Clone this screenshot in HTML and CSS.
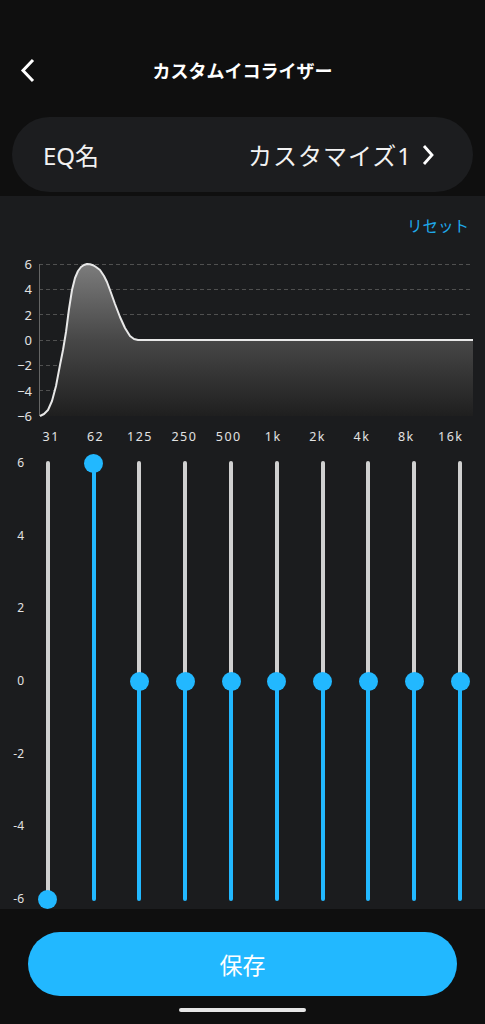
FILE: index.html
```html
<!DOCTYPE html>
<html>
<head>
    <title>カスタムイコライザー</title>
    <link rel="stylesheet" href="styles.css">
</head>
<body>
    <div class="top">
        <div class="header">
            <a class="back" href="#">
                <svg width="16" height="26" viewBox="0 0 16 26"><path d="M13 3 L3 13.5 L13 24" fill="none" stroke="#fff" stroke-width="3"/></svg>
            </a>
            <h1 class="title">カスタムイコライザー</h1>
            <span></span>
        </div>

        <div class="name-card">
            <span class="name-label">EQ名</span>
            <span class="name-value">
                <span class="name-text">カスタマイズ1</span>
                <svg width="14" height="22" viewBox="0 0 14 22"><path d="M3 2 L11 11 L3 20" fill="none" stroke="#fff" stroke-width="2.8"/></svg>
            </span>
        </div>
    </div>

    <div class="panel">
        <div class="reset-row"><a class="reset" href="#">リセット</a></div>

        <div class="graph">
            <div class="graph-axis">
                <span>6</span><span>4</span><span>2</span><span>0</span><span>−2</span><span>−4</span><span>−6</span>
            </div>
            <svg class="curve" width="434" height="166" viewBox="0 -7 434 166">
                <defs>
                    <linearGradient id="fill" x1="0" y1="0" x2="0" y2="152" gradientUnits="userSpaceOnUse">
                        <stop offset="0" stop-color="#7c7c7c"/>
                        <stop offset="0.5" stop-color="#474747"/>
                        <stop offset="1" stop-color="#1f1f1f"/>
                    </linearGradient>
                </defs>
                <g stroke="#505050" stroke-width="1" stroke-dasharray="4 3">
                    <line x1="0" y1="0.5" x2="434" y2="0.5"/>
                    <line x1="0" y1="25.5" x2="434" y2="25.5"/>
                    <line x1="0" y1="50.5" x2="434" y2="50.5"/>
                    <line x1="0" y1="76.5" x2="434" y2="76.5"/>
                    <line x1="0" y1="101.5" x2="434" y2="101.5"/>
                    <line x1="0" y1="126.5" x2="434" y2="126.5"/>
                    <line x1="0" y1="151.5" x2="434" y2="151.5"/>
                </g>
                <line x1="0.5" y1="0" x2="0.5" y2="152" stroke="#666"/>
                <polygon fill="url(#fill)" points="1,152 5,150 9,146 13,137 17,122 21,101 24,86 27,68 30,45 33,26 36,14 39,7 42,3 45,1 48,0 51,0.3 54,1.2 57,3 61,6 65,12 68,18 71,26 76,40 81,53 86,64 91,72 95,75 99,76 434,76 434,152"/>
                <polyline fill="none" stroke="#e8e8e8" stroke-width="2" stroke-linejoin="round" points="1,152 5,150 9,146 13,137 17,122 21,101 24,86 27,68 30,45 33,26 36,14 39,7 42,3 45,1 48,0 51,0.3 54,1.2 57,3 61,6 65,12 68,18 71,26 76,40 81,53 86,64 91,72 95,75 99,76 434,76"/>
            </svg>
        </div>

        <div class="freqs">
            <span>31</span><span>62</span><span>125</span><span>250</span><span>500</span>
            <span>1k</span><span>2k</span><span>4k</span><span>8k</span><span>16k</span>
        </div>

        <div class="sliders">
            <div class="slider-axis">
                <span>6</span><span>4</span><span>2</span><span>0</span><span>-2</span><span>-4</span><span>-6</span>
            </div>
            <!-- --y = knob centre on the track: 2 + (6 - gain) / 12 * 436 -->
            <div class="band" style="--y: 438px"><div class="track"></div><div class="knob"></div></div>
            <div class="band" style="--y: 2px"><div class="track"></div><div class="knob"></div></div>
            <div class="band" style="--y: 220px"><div class="track"></div><div class="knob"></div></div>
            <div class="band" style="--y: 220px"><div class="track"></div><div class="knob"></div></div>
            <div class="band" style="--y: 220px"><div class="track"></div><div class="knob"></div></div>
            <div class="band" style="--y: 220px"><div class="track"></div><div class="knob"></div></div>
            <div class="band" style="--y: 220px"><div class="track"></div><div class="knob"></div></div>
            <div class="band" style="--y: 220px"><div class="track"></div><div class="knob"></div></div>
            <div class="band" style="--y: 220px"><div class="track"></div><div class="knob"></div></div>
            <div class="band" style="--y: 220px"><div class="track"></div><div class="knob"></div></div>
        </div>
    </div>

    <div class="footer">
        <button class="save">保存</button>
        <div class="home-bar"></div>
    </div>
</body>
</html>
```

FILE: styles.css
```css
body {
    margin: 0;
    width: 485px;
    height: 1024px;
    background-color: #0f0f0f;
    color: #fff;
    font-family: "Noto Sans", "Noto Sans CJK JP", sans-serif;
    overflow: hidden;
}

.top {
    padding-bottom: 4px;
}

.header {
    display: grid;
    grid-template-columns: 60px 1fr 60px;
    align-items: center;
    height: 40px;
    padding-top: 50px;
}

.back {
    display: flex;
    padding-left: 20px;
}

.title {
    margin: 0;
    text-align: center;
    font-family: "Noto Sans CJK JP", sans-serif;
    font-size: 18px;
    font-weight: 700;
    line-height: 40px;
}

.name-card {
    display: flex;
    align-items: center;
    justify-content: space-between;
    height: 75px;
    margin: 27px 12px 0;
    padding: 0 38px 0 31px;
    border-radius: 38px;
    background-color: #1c1d1f;
    font-family: "Noto Sans", "Noto Sans CJK JP", sans-serif;
    font-size: 24px;
    color: #f2f2f2;
}

.name-value {
    display: flex;
    align-items: center;
    gap: 9px;
}

.name-text {
    letter-spacing: 1px;
}

.panel {
    background-color: #1b1c1e;
    padding: 20px 0 2px;
}

.reset-row {
    display: flex;
    justify-content: flex-end;
    padding-right: 16px;
    line-height: 18px;
}

.reset {
    font-family: "Noto Sans CJK JP", sans-serif;
    font-size: 15.5px;
    color: #1fa9ea;
    text-decoration: none;
}

.graph {
    display: flex;
    margin-top: 23px;
    height: 166px;
}

.graph-axis {
    display: flex;
    flex-direction: column;
    justify-content: space-between;
    align-items: flex-end;
    width: 32px;
    padding-right: 7px;
    font-size: 13px;
    line-height: 14px;
    color: #e2e2e2;
}

.curve {
    display: block;
    overflow: visible;
}

.freqs {
    display: grid;
    grid-template-columns: repeat(10, 1fr);
    margin-top: 6px;
    padding: 0 12px 0 29px;
    font-size: 12.5px;
    line-height: 16px;
    letter-spacing: 1.5px;
    color: #e2e2e2;
    text-align: center;
}

.sliders {
    display: grid;
    grid-template-columns: 25px repeat(10, 1fr);
    height: 452px;
    margin-top: 10px;
    padding-right: 2px;
}

.slider-axis {
    display: flex;
    flex-direction: column;
    justify-content: space-between;
    align-items: flex-end;
    padding-right: 1px;
    font-size: 12px;
    line-height: 16px;
    color: #e2e2e2;
}

.band {
    position: relative;
    display: flex;
    justify-content: center;
    padding-top: 6px;
}

.track {
    width: 4px;
    height: 440px;
    border-radius: 2px;
    background: linear-gradient(#d0d0d0 0, #d0d0d0 var(--y), #22b8ff var(--y), #22b8ff 100%);
}

.knob {
    position: absolute;
    top: calc(var(--y) - 3.5px);
    left: 50%;
    width: 19px;
    height: 19px;
    margin-left: -9.5px;
    border-radius: 50%;
    background-color: #22b8ff;
}

.footer {
    display: flex;
    flex-direction: column;
    align-items: center;
    padding-top: 23px;
}

.save {
    width: 429px;
    height: 64px;
    border: none;
    border-radius: 32px;
    background-color: #22b8ff;
    color: #fff;
    font-family: "Noto Sans CJK JP", sans-serif;
    font-size: 23px;
    cursor: pointer;
}

.home-bar {
    width: 127px;
    height: 4px;
    margin-top: 12px;
    border-radius: 3px;
    background-color: #e6e6e6;
}
```
